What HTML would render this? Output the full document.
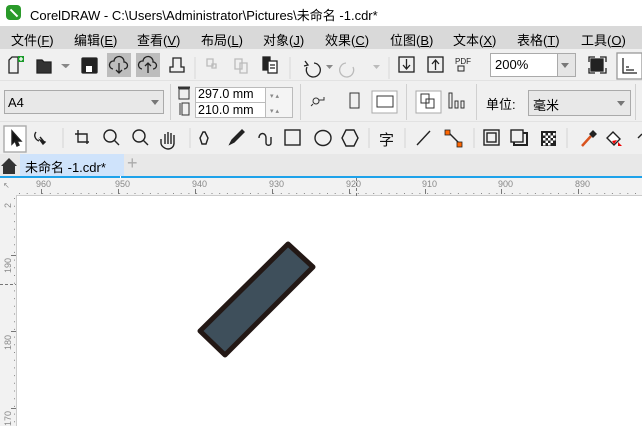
<!DOCTYPE html>
<html><head><meta charset="utf-8"><style>
*{margin:0;padding:0;box-sizing:border-box}
body{width:642px;height:426px;overflow:hidden;background:#fff;font-family:"Liberation Sans","Noto Sans CJK SC",sans-serif;position:relative;font-size:12px;color:#000}
.a{position:absolute}
.menu span{position:absolute;top:4px;font-size:13px}
svg{position:absolute;overflow:visible}
.sep{position:absolute;width:1px;background:#d0d0d0}
.rl{position:absolute;font-size:9px;color:#888;top:179px}
</style></head><body>
<!-- title -->
<div class="a" style="left:6px;top:5px;width:15px;height:15px;border-radius:4px;background:#2a9a2a"></div>
<div class="a" style="left:9px;top:12px;width:10px;height:2px;background:#fff;transform:rotate(45deg)"></div>
<div class="a" style="left:30px;top:5px;font-size:13px">CorelDRAW - C:\Users\Administrator\Pictures\未命名 -1.cdr*</div>
<!-- menu -->
<div class="a menu" style="left:0;top:26px;width:642px;height:23px;background:#d9d9d9">
<span style="left:11px">文件(<u>F</u>)</span><span style="left:74px">编辑(<u>E</u>)</span><span style="left:137px">查看(<u>V</u>)</span><span style="left:201px">布局(<u>L</u>)</span><span style="left:263px">对象(<u>J</u>)</span><span style="left:325px">效果(<u>C</u>)</span><span style="left:390px">位图(<u>B</u>)</span><span style="left:453px">文本(<u>X</u>)</span><span style="left:517px">表格(<u>T</u>)</span><span style="left:581px">工具(<u>O</u>)</span>
</div>
<!-- toolbars bg -->
<div class="a" style="left:0;top:49px;width:642px;height:105px;background:#f0f0f0"></div>
<div class="a" style="left:0;top:80px;width:642px;height:1px;background:#e2e2e2"></div>
<div class="a" style="left:0;top:121px;width:642px;height:1px;background:#e2e2e2"></div>
<!-- toolbar1 -->
<svg style="left:0;top:49px" width="642" height="31" fill="none" stroke="#222" stroke-width="1.3">
<path d="M9 24V11l3-3h6v16z"/><rect x="18" y="7" width="6" height="6" fill="#1a9a2a" stroke="none"/><path d="M21 8v4M19 10h4" stroke="#fff"/>
<path d="M37 24V11h5l2 2h7v11z" fill="#333"/><path d="M63 16l3 3 3-3" fill="#777" stroke="none"/><path d="M61 15h9l-4.5 4z" fill="#888" stroke="none"/>
<rect x="82" y="9" width="15" height="15" rx="1" fill="#222"/><rect x="86" y="17" width="6" height="6" fill="#fff" stroke="none"/>
<rect x="107" y="4" width="24" height="24" fill="#bdbdbd" stroke="none"/><rect x="136" y="4" width="24" height="24" fill="#bdbdbd" stroke="none"/>
<path d="M113 20a4 4 0 0 1 1-8 5 5 0 0 1 10 1 3.5 3.5 0 0 1 0 7M119 14v10M116 21l3 3 3-3"/>
<path d="M142 20a4 4 0 0 1 1-8 5 5 0 0 1 10 1 3.5 3.5 0 0 1 0 7M148 24v-10M145 17l3-3 3 3"/>
<path d="M170 23h14v-5h-3v-9h-8v9h-3z"/>
<path d="M195 8v22" stroke="#ddd"/>
<path d="M207 10h6v7h-6zM212 15h4v4h-4z" stroke="#bbb"/><path d="M235 10h7v10h-7zM240 14h7v10h-7z" stroke="#bbb"/>
<rect x="263" y="8" width="7" height="13" fill="#222"/><rect x="268" y="12" width="9" height="12" fill="#fff"/><path d="M270 16h5M270 19h5"/>
<path d="M290 8v22" stroke="#ddd"/>
<path d="M314 14a7 7 0 1 1-7 4M305 12l3 4-4 1" /><path d="M326 16h7l-3.5 4z" fill="#888" stroke="none"/>
<path d="M346 14a7 7 0 1 0 7 4" stroke="#bbb"/><path d="M373 16h7l-3.5 4z" fill="#bbb" stroke="none"/>
<path d="M389 8v22" stroke="#ddd"/>
<rect x="399" y="8" width="15" height="15"/><path d="M406.5 10v10M403 16l3.5 4 3.5-4"/>
<rect x="428" y="8" width="15" height="15"/><path d="M435.5 21v-10M432 15l3.5-4 3.5 4"/>
<text x="455" y="15" font-size="8" fill="#222" stroke="none" font-family="Liberation Sans">PDF</text><rect x="458" y="17" width="6" height="5" stroke-width="1"/>
<path d="M595 8h-6v5M600 8h6v5M595 24h-6v-5M600 24h6v-5"/><rect x="591" y="10" width="12" height="12" fill="#222"/>
<rect x="617" y="4" width="25" height="26" fill="#fff" stroke="#999"/><path d="M623 9v15h14"/><path d="M626 21h8M626 18h3"/>
</svg>
<div class="a" style="left:490px;top:53px;width:86px;height:24px;background:#fff;border:1px solid #aaa"></div>
<div class="a" style="left:557px;top:54px;width:18px;height:22px;background:#e5e5e5;border-left:1px solid #aaa"></div>
<div class="a" style="left:561px;top:63px;border:4px solid transparent;border-top:5px solid #777"></div>
<div class="a" style="left:495px;top:57px;font-size:13px">200%</div>
<!-- toolbar2 -->
<div class="a" style="left:4px;top:90px;width:160px;height:24px;background:#e8e8e8;border:1px solid #aaa"></div>
<div class="a" style="left:8px;top:95px;font-size:13px">A4</div>
<div class="a" style="left:151px;top:100px;border:4px solid transparent;border-top:5px solid #777"></div>
<div class="sep" style="left:170px;top:84px;height:36px"></div>
<svg style="left:0;top:81px" width="642" height="40" fill="none" stroke="#333" stroke-width="1">
<rect x="179" y="8" width="10" height="10"/><path d="M178 7h12M178 6h12"/><rect x="182" y="22" width="7" height="12"/><path d="M180 22v12"/>
<circle cx="316" cy="20" r="3"/><path d="M319 19h5v-3M313 23l-2 2"/>
<rect x="350" y="12" width="9" height="15"/>
<rect x="372" y="10" width="25" height="22" fill="#fff" stroke="#aaa"/><rect x="377" y="15" width="16" height="11"/>
<rect x="416" y="10" width="25" height="22" fill="#fff" stroke="#aaa"/><rect x="421" y="13" width="8" height="9"/><rect x="426" y="18" width="8" height="9"/>
<rect x="449" y="12" width="3" height="15"/><rect x="455" y="20" width="3" height="7"/><rect x="461" y="20" width="3" height="7"/>
</svg>
<div class="a" style="left:195px;top:87px;width:98px;height:31px;border:1px solid #bbb;background:#fff"></div>
<div class="a" style="left:195px;top:102px;width:98px;height:1px;background:#bbb"></div>
<div class="a" style="left:265px;top:87px;width:1px;height:31px;background:#bbb"></div>
<div class="a" style="left:266px;top:88px;width:26px;height:29px;background:#f4f4f4"></div>
<div class="a" style="left:198px;top:87px;font-size:12.5px">297.0 mm</div>
<div class="a" style="left:198px;top:103px;font-size:12.5px">210.0 mm</div>
<div class="a" style="left:270px;top:92px;font-size:7px;color:#888">▾ ▴</div>
<div class="a" style="left:270px;top:107px;font-size:7px;color:#888">▾ ▴</div>
<div class="sep" style="left:300px;top:84px;height:36px"></div>
<div class="sep" style="left:406px;top:84px;height:36px"></div>
<div class="sep" style="left:476px;top:84px;height:36px"></div>
<div class="a" style="left:486px;top:94px;font-size:13px">单位:</div>
<div class="a" style="left:528px;top:90px;width:103px;height:26px;background:#e8e8e8;border:1px solid #aaa"></div>
<div class="a" style="left:533px;top:95px;font-size:13px">毫米</div>
<div class="a" style="left:617px;top:101px;border:4px solid transparent;border-top:5px solid #777"></div>
<div class="sep" style="left:635px;top:84px;height:36px"></div>
<!-- toolbar3 -->
<svg style="left:0;top:122px" width="642" height="32" fill="none" stroke="#222" stroke-width="1.4">
<rect x="4" y="4" width="22" height="26" fill="#fff" stroke="#aaa"/><path d="M12 9v13l3-3 2 5 2-1-2-4h4z" fill="#111"/>
<path d="M36 10c-3 4 0 8 3 9M40 15l5 6" /><path d="M40 18l5 2-2 2z" fill="#111"/>
<path d="M63 6v20" stroke="#ddd"/>
<path d="M78 8v12h11M75 12h12v10"/>
<circle cx="110" cy="14" r="6"/><path d="M114 18l5 5"/>
<circle cx="139" cy="14" r="6"/><path d="M143 18l5 5"/>
<path d="M165 22v-10m3 10v-12m3 12v-11m3 11v-9v8c0 4-3 6-6 6s-7-3-7-6v-4"/>
<path d="M190 6v20" stroke="#ddd"/>
<path d="M203 10l-3 6 2 6h4l2-6-3-6z"/><path d="M230 22l2-4 10-10 2 2-10 10z" fill="#222"/>
<path d="M259 16c0-6 7-6 7 0v5c0 3 5 3 5 0v-6"/>
<rect x="285" y="8" width="15" height="15"/><ellipse cx="323" cy="16" rx="8" ry="7.5"/><path d="M346 8h8l4 8-4 8h-8l-4-8z"/>
<path d="M369 6v20" stroke="#ddd"/>
<text x="379" y="23" font-size="15" fill="#111" stroke="none" font-family="Noto Sans CJK SC">字</text>
<path d="M405 6v20" stroke="#ddd"/>
<path d="M417 23l13-14"/><path d="M448 10l12 12"/><rect x="445" y="8" width="5" height="5" fill="#f60" stroke="#222" stroke-width=".8"/><rect x="457" y="20" width="5" height="5" fill="#f60" stroke="#222" stroke-width=".8"/>
<path d="M474 6v20" stroke="#ddd"/>
<rect x="484" y="8" width="15" height="15"/><rect x="487" y="11" width="9" height="9"/><rect x="511" y="8" width="12" height="12"/><path d="M514 20v3h13v-12h-4" stroke-width="2"/>
<g stroke="none" fill="#222"><rect x="541" y="9" width="15" height="15"/></g>
<g stroke="none" fill="#fff"><rect x="543" y="11" width="2.5" height="2.5"/><rect x="548" y="11" width="2.5" height="2.5"/><rect x="553" y="11" width="2.5" height="2.5"/><rect x="545.5" y="13.5" width="2.5" height="2.5"/><rect x="550.5" y="13.5" width="2.5" height="2.5"/><rect x="543" y="16" width="2.5" height="2.5"/><rect x="548" y="16" width="2.5" height="2.5"/><rect x="553" y="16" width="2.5" height="2.5"/><rect x="545.5" y="18.5" width="2.5" height="2.5"/><rect x="550.5" y="18.5" width="2.5" height="2.5"/><rect x="543" y="21" width="2.5" height="2.5"/><rect x="548" y="21" width="2.5" height="2.5"/></g>
<path d="M567 6v20" stroke="#ddd"/>
<path d="M582 24l9-10" stroke="#d9531e" stroke-width="2.5"/><path d="M590 12l3-3 3 3-3 3z" fill="#222"/>
<path d="M607 16l6-6 7 7-6 6z" fill="#fff"/><path d="M612 19l5-1-3 4z" fill="#e00" stroke="none"/><path d="M618 20l4 4-4 0z" fill="#e00" stroke="none"/>
<path d="M638 16l4-4" />
</svg>
<!-- tab row -->
<div class="a" style="left:0;top:154px;width:642px;height:23px;background:#e8e8e8"></div>
<svg style="left:0;top:157px" width="20" height="18"><path d="M1 9L9 1l8 8h-2v8H3V9z" fill="#333"/></svg>
<div class="a" style="left:20px;top:154px;width:104px;height:23px;background:#cfe3fb"></div>
<div class="a" style="left:25px;top:157px;font-size:13px">未命名 -1.cdr*</div>
<div class="a" style="left:127px;top:153px;font-size:18px;color:#aaa">+</div>
<div class="a" style="left:0;top:176px;width:642px;height:2px;background:#1ea2ea"></div>
<div class="a" style="left:120px;top:176px;width:1px;height:2px;background:#fff"></div>
<!-- rulers -->
<div class="a" style="left:0;top:178px;width:642px;height:18px;background:#f2f2f2"></div>
<div class="a" style="left:0;top:178px;width:16px;height:248px;background:#f2f2f2"></div>
<div class="a" style="left:16px;top:195px;width:626px;height:1px;background:#ccc"></div>
<div class="a" style="left:16px;top:196px;width:1px;height:230px;background:#ccc"></div>
<div class="rl" style="left:36px">960</div><div class="rl" style="left:115px">950</div><div class="rl" style="left:192px">940</div><div class="rl" style="left:269px">930</div><div class="rl" style="left:346px">920</div><div class="rl" style="left:422px">910</div><div class="rl" style="left:498px">900</div><div class="rl" style="left:575px">890</div>
<svg style="left:0;top:178px" width="642" height="248">
<g stroke="#888" stroke-width="1" stroke-dasharray="1 6.7"><path d="M19 15.5H642"/><path d="M14.5 20V248"/></g>
<g stroke="#777"><path d="M41.5 11v5M118.5 11v5M195.5 11v5M272.5 11v5M349.5 11v5M425.5 11v5M501.5 11v5M578.5 11v5"/><path d="M11 77.5h5M11 153.5h5M11 230.5h5"/><path d="M356.5 0v18" stroke-dasharray="3 2"/><path d="M0 106.5h16" stroke-dasharray="3 2"/></g>
<text x="3" y="10" font-size="8" fill="#888" font-family="Liberation Sans">↖</text>
<g font-size="9" fill="#888" font-family="Liberation Sans"><text transform="translate(11,30) rotate(-90)">2</text><text transform="translate(11,95) rotate(-90)">190</text><text transform="translate(11,172) rotate(-90)">180</text><text transform="translate(11,248) rotate(-90)">170</text></g>
</svg>
<!-- shape -->
<svg style="left:0;top:0" width="642" height="426"><polygon points="288,244 313,267 225,355 200,331" fill="#3e4f5b" stroke="#231815" stroke-width="5" stroke-linejoin="round"/></svg>
</body></html>
